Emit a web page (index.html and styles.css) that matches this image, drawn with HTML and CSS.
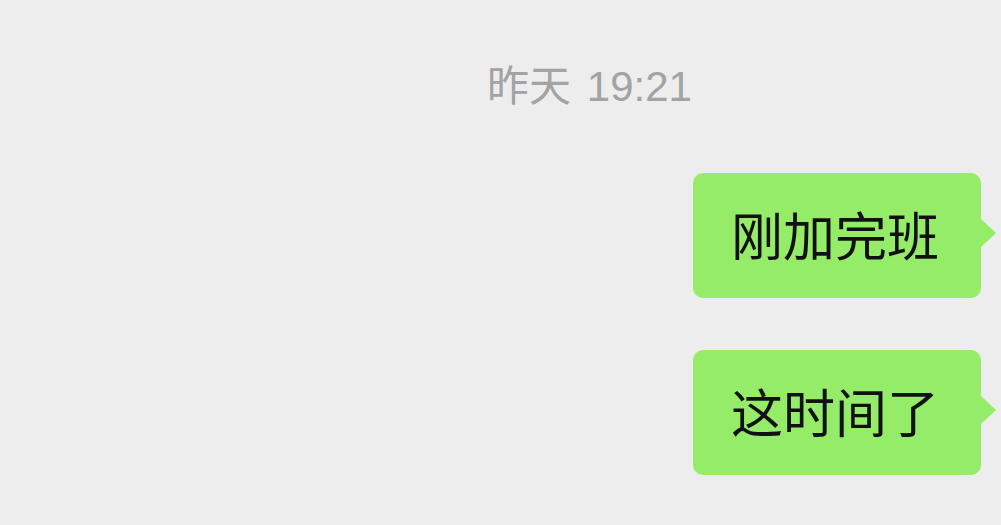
FILE: index.html
```html
<!DOCTYPE html>
<html lang="zh-CN">
    <head>
        <meta charset="UTF-8">
        <meta name="viewport" content="width=device-width, initial-scale=1.0">
        <title>聊天</title>
        <link rel="stylesheet" href="styles.css">
    </head>
    <body>
        <div class="chat">
            <div class="time-row">
                <span class="time">昨天 19:21</span>
            </div>

            <div class="msg-row">
                <div class="bubble">刚加完班</div>
            </div>

            <div class="msg-row">
                <div class="bubble">这时间了</div>
            </div>
        </div>
    </body>
</html>
```

FILE: styles.css
```css
* {
    margin: 0;
    padding: 0;
    box-sizing: border-box;
}

body {
    background-color: #ededed;
    font-family: 'Liberation Sans', 'Noto Sans CJK SC', sans-serif;
    width: 1001px;
    height: 525px;
    overflow: hidden;
}

.chat {
    display: flex;
    flex-direction: column;
    padding: 63px 20px 0 0;
}

.time-row {
    display: flex;
    justify-content: center;
    padding-left: 198px;
    margin-bottom: 62px;
}

.time {
    color: #a3a3a3;
    font-size: 42px;
    line-height: 48px;
    word-spacing: 4px;
}

.msg-row {
    display: flex;
    justify-content: flex-end;
    margin-bottom: 52px;
}

.bubble {
    position: relative;
    background-color: #95ec69;
    color: #111;
    font-family: 'Noto Sans CJK SC', sans-serif;
    font-size: 52px;
    line-height: 121px;
    height: 125px;
    padding: 0 42px 4px 38px;
    border-radius: 10px;
}

/* little arrow on the right side of the bubble */
.bubble::after {
    content: '';
    position: absolute;
    right: -15px;
    top: 46px;
    border-top: 14px solid transparent;
    border-bottom: 14px solid transparent;
    border-left: 15px solid #95ec69;
}
```
